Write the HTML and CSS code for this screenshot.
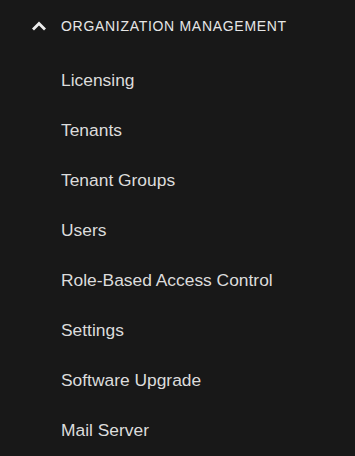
FILE: index.html
```html
<!DOCTYPE html>
<html>
<head>
<meta charset="utf-8">
<link rel="stylesheet" href="styles.css">
</head>
<body>
<nav class="menu">
  <div class="group-head">
    <svg class="chev" width="16" height="10" viewBox="0 0 16 10"><path d="M2 8.5 L8 2.5 L14 8.5" fill="none" stroke="#ececec" stroke-width="2.8"/></svg>
    <span class="group-title">ORGANIZATION MANAGEMENT</span>
  </div>
  <ul class="items">
    <li>Licensing</li>
    <li>Tenants</li>
    <li>Tenant Groups</li>
    <li>Users</li>
    <li>Role-Based Access Control</li>
    <li>Settings</li>
    <li>Software Upgrade</li>
    <li>Mail Server</li>
  </ul>
</nav>
</body>
</html>
```
FILE: styles.css
```css
html, body {
  margin: 0;
  padding: 0;
  background: #181818;
  height: 100%;
}
.menu {
  font-family: "Liberation Sans", Arial, sans-serif;
  color: #dcdcdc;
}
.group-head {
  display: flex;
  align-items: center;
  height: 52px;
  padding-left: 31px;
}
.chev {
  display: block;
  margin-right: 14px;
}
.group-title {
  font-size: 14px;
  letter-spacing: 0.7px;
  color: #e6e6e6;
}
.items {
  list-style: none;
  margin: 0;
  padding: 3px 0 0 61px;
}
.items li {
  height: 50px;
  line-height: 50px;
  font-size: 17.4px;
}
```
